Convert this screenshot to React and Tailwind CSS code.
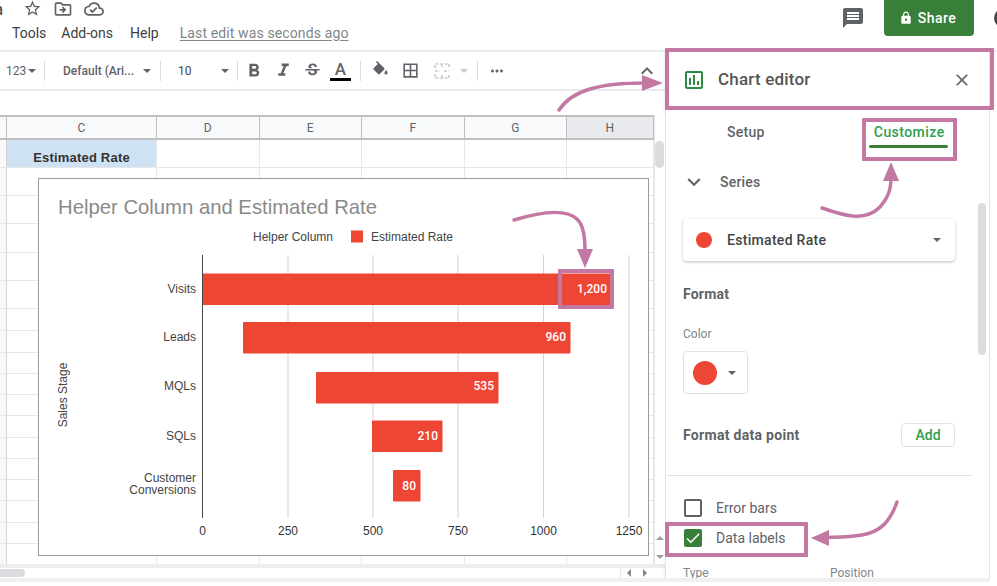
import {
  MdStarBorder,
  MdOutlineDriveFileMove,
  MdOutlineCloudDone,
  MdMessage,
  MdLock,
  MdFormatBold,
  MdFormatItalic,
  MdStrikethroughS,
  MdBorderAll,
  MdMoreHoriz,
  MdKeyboardArrowUp,
  MdClose,
  MdExpandMore,
  MdOutlineInsertChart,
  MdCheck,
} from 'react-icons/md';

const columns = [
  { name: 'C', w: 'w-[150px]' },
  { name: 'D', w: 'w-[102.5px]' },
  { name: 'E', w: 'w-[102.5px]' },
  { name: 'F', w: 'w-[102.5px]' },
  { name: 'G', w: 'w-[102.5px]' },
  { name: 'H', w: 'w-[86.5px]', active: true },
];

const rowHeights = [
  'h-[28px]', 'h-[28px]', 'h-[28px]', 'h-[29px]', 'h-[28px]', 'h-[28px]',
  'h-[22px]', 'h-[22px]', 'h-[21px]', 'h-[21px]', 'h-[21px]', 'h-[22px]',
  'h-[21px]', 'h-[21px]', 'h-[21px]', 'h-[22px]', 'h-[21px]', 'h-[21px]',
];

const bars = [
  { label: 'Visits', x1: 202.5, x2: 612, y: 273.5, textY: 292.5, value: '1,200', end: 607 },
  { label: 'Leads', x1: 243, x2: 570.5, y: 322, textY: 341, value: '960', end: 566 },
  { label: 'MQLs', x1: 316, x2: 498.5, y: 372, textY: 390, value: '535', end: 494 },
  { label: 'SQLs', x1: 372, x2: 442.5, y: 420.5, textY: 440, value: '210', end: 438 },
  { x1: 393, x2: 420.5, y: 470, textY: 489.5, value: '80', end: 416 },
];

const ticks = [
  { v: '0', x: 202.5 },
  { v: '250', x: 288 },
  { v: '500', x: 373 },
  { v: '750', x: 458 },
  { v: '1000', x: 543.5 },
  { v: '1250', x: 629 },
];

function Caret({ className = 'border-t-[#5f6368]' }) {
  return <span className={`inline-block w-0 h-0 border-x-[4px] border-x-transparent border-t-[4px] ${className}`} />;
}

function Sep() {
  return <span className="block w-px h-[20px] bg-[#dadce0] shrink-0" />;
}

function Header() {
  return (
    <header className="h-[52px] shrink-0 border-b-2 border-[#e8eaed] flex justify-between">
      <div>
        <div className="h-[19px] flex items-center text-[#5f6368]">
          <span className="text-[17px] leading-none text-[#444] w-[19px] overflow-hidden">
            <span className="block -ml-[6px]">a</span>
          </span>
          <MdStarBorder size={19} className="ml-[4px] mt-[-2px] text-[#5f6368]" />
          <MdOutlineDriveFileMove size={20} className="ml-[11px] mt-[-2px]" />
          <MdOutlineCloudDone size={20} className="ml-[11px] mt-[-2px]" />
        </div>
        <nav className="flex items-center pl-[12px] mt-[6px] text-[14px] text-[#3c4043] h-[16px]">
          <span>Tools</span>
          <span className="ml-[15px]">Add-ons</span>
          <span className="ml-[17px]">Help</span>
          <span className="ml-[21px] text-[#80868b] underline underline-offset-2 tracking-[0.12px]">Last edit was seconds ago</span>
        </nav>
      </div>
      <div className="flex items-start">
        <MdMessage size={24} className="mt-[6px] text-[#5f6368]" />
        <button className="ml-[19px] w-[90px] h-[36px] pr-[3px] bg-[#38803a] rounded-b-[4px] text-white text-[14px] tracking-[0.5px] font-medium flex items-center justify-center gap-[5px]">
          <MdLock size={14} />
          Share
        </button>
        <span className="ml-[20px] w-[20px] h-[20px] mt-[8px] rounded-full bg-[#444] shrink-0 mr-[-17px]" />
      </div>
    </header>
  );
}

function MergeIcon() {
  return (
    <svg width="18" height="18" viewBox="0 0 18 18" fill="none" stroke="#c8cacd" strokeWidth="1.6">
      <path d="M2 6V2h14v4M2 12v4h14v-4M2 9h5M11 9h5M9 2v3M9 13v3" strokeDasharray="3 1.5" />
    </svg>
  );
}

function FillIcon() {
  return (
    <svg width="19" height="19" viewBox="0 0 24 24" fill="#5f6368">
      <path d="M16.56 8.94 7.62 0 6.21 1.41l2.38 2.38-5.15 5.15c-.59.59-.59 1.54 0 2.12l5.5 5.5c.29.29.68.44 1.06.44s.77-.15 1.06-.44l5.5-5.5c.59-.58.59-1.53 0-2.12z" />
      <path d="M19 11.5s-2 2.17-2 3.5c0 1.1.9 2 2 2s2-.9 2-2c0-1.33-2-3.5-2-3.5z" />
    </svg>
  );
}

function Toolbar() {
  return (
    <div className="h-[39px] shrink-0 border-b-2 border-[#e8eaed] flex items-center text-[#5f6368]">
      <span className="ml-[6px] text-[12px] w-[22px]">123</span>
      <Caret />
      <span className="ml-[8px]"><Sep /></span>
      <span className="ml-[18px] w-[80px] text-[12px] font-[500]">Default (Ari...</span>
      <Caret />
      <span className="ml-[9px]"><Sep /></span>
      <span className="ml-[17px] w-[43px] text-[12px] text-[#444]">10</span>
      <Caret />
      <span className="ml-[8px]"><Sep /></span>
      <MdFormatBold size={22} className="ml-[5px]" />
      <MdFormatItalic size={21} className="ml-[8px]" />
      <MdStrikethroughS size={19} className="ml-[9px]" />
      <span className="ml-[8px] w-[21px] flex flex-col items-center">
        <span className="text-[17px] leading-[17px] font-medium">A</span>
        <span className="w-full h-[3px] bg-black" />
      </span>
      <span className="ml-[9px]"><Sep /></span>
      <span className="ml-[10px]"><FillIcon /></span>
      <MdBorderAll size={19} className="ml-[11px]" />
      <span className="ml-[13px]"><MergeIcon /></span>
      <Caret className="ml-[9px] border-t-[#c8cacd]" />
      <span className="ml-[9px]"><Sep /></span>
      <MdMoreHoriz size={18} className="ml-[10px]" />
      <MdKeyboardArrowUp size={24} className="ml-[129px]" />
    </div>
  );
}

function Chart() {
  return (
    <div className="absolute left-[38px] top-[63px] w-[611px] h-[378px] border border-[#9a9a9a] bg-white">
      <svg width="609" height="376" viewBox="39 179 609 376" fontFamily="'Liberation Sans', Arial, sans-serif">
        <text x="58" y="214" fontSize="20.3" fill="#8a8a8a">Helper Column and Estimated Rate</text>
        <text x="253" y="241" fontSize="12" fill="#444">Helper Column</text>
        <rect x="351" y="230.5" width="12" height="12" fill="#ee4635" />
        <text x="371" y="241" fontSize="12" fill="#444">Estimated Rate</text>
        <text transform="translate(67 395) rotate(-90)" textAnchor="middle" fontSize="12" fill="#444">Sales Stage</text>

        {ticks.slice(1).map(t => (
          <line key={t.v} x1={t.x} x2={t.x} y1="255" y2="518" stroke="#d3d3d3" />
        ))}
        {bars.map(b => (
          <rect key={b.value} x={b.x1} y={b.y} width={b.x2 - b.x1} height="31.5" rx="1" fill="#ee4635" />
        ))}
        <line x1="202.5" x2="202.5" y1="255" y2="518" stroke="#444" />

        {bars.map(b => b.label && (
          <text key={b.label} x="196" y={b.textY} textAnchor="end" fontSize="12" fill="#444">{b.label}</text>
        ))}
        <text x="196" y="482" textAnchor="end" fontSize="12" fill="#444">Customer</text>
        <text x="196" y="494" textAnchor="end" fontSize="12" fill="#444">Conversions</text>

        {bars.map(b => (
          <text key={b.value} x={b.end} y={b.textY} textAnchor="end" fontSize="12" fontWeight="500" fontFamily="Roboto, sans-serif" fill="#fff">{b.value}</text>
        ))}
        {ticks.map(t => (
          <text key={t.v} x={t.x} y="534.5" textAnchor="middle" fontSize="12" fill="#333">{t.v}</text>
        ))}
      </svg>
    </div>
  );
}

function Sheet() {
  return (
    <div className="relative flex-1 min-h-0 flex">
      <div className="w-[653.5px] shrink-0 flex flex-col overflow-hidden">
        <div className="h-[25px] shrink-0 flex border-t-2 border-b-2 border-[#c0c0c0] bg-[#f8f9fa] text-[12px] text-[#5f6368]">
          <div className="w-[7px] shrink-0 border-r border-[#c0c0c0]" />
          {columns.map(c => (
            <div
              key={c.name}
              className={`${c.w} shrink-0 border-r border-[#c0c0c0] flex items-center justify-center ${c.active ? 'bg-[#e8eaed]' : ''}`}
            >
              {c.name}
            </div>
          ))}
        </div>
        {rowHeights.map((h, i) => (
          <div key={i} className={`${h} shrink-0 flex border-b border-[#e6e7e8]`}>
            <div className="w-[7px] shrink-0 bg-[#f8f9fa] border-r border-[#d4d4d4]" />
            {columns.map((c, j) => (
              <div
                key={c.name}
                className={`${c.w} shrink-0 border-r border-[#e6e7e8] ${i === 0 && j === 0 ? 'bg-[#cfe2f3] flex items-end justify-center text-[13px] tracking-[0.2px] font-bold text-[#333] font-["Liberation_Sans",sans-serif]' : ''}`}
              >
                {i === 0 && j === 0 ? 'Estimated Rate' : null}
              </div>
            ))}
          </div>
        ))}
      </div>
      <div className="flex-1 flex flex-col items-center bg-white border-l border-[#e6e7e8] pt-[26px]">
        <div className="w-[9px] h-[27px] rounded-full bg-[#dadce0]" />
        <div className="mt-auto mb-[5px] flex flex-col items-center gap-[15px]">
          <Caret className="rotate-180 border-t-[#9aa0a6]" />
          <Caret className="border-t-[#9aa0a6]" />
        </div>
      </div>
      <Chart />
    </div>
  );
}

function Panel() {
  return (
    <aside className="w-[325px] shrink-0 flex flex-col border-l border-r border-[#e3e4e6] shadow-[-1px_0_3px_rgba(0,0,0,0.08)] bg-white text-[#5f6368] overflow-hidden">
      <div className="h-[55px] shrink-0 flex items-center pl-[16px] pr-[17px]">
        <MdOutlineInsertChart size={24} className="text-[#2f8a43]" />
        <span className="ml-[12px] text-[17px] tracking-[0.2px] font-medium text-[#555]">Chart editor</span>
        <MdClose size={20} className="ml-auto" />
      </div>
      <div className="h-[45px] shrink-0 flex relative text-[14px] tracking-[0.3px] font-medium">
        <span className="ml-[61px] mt-[15px]">Setup</span>
        <span className="ml-[109px] mt-[15px] tracking-[0.45px] text-[#2f9e4f]">Customize</span>
        <span className="absolute left-[203px] top-[38px] w-[79px] h-[3px] bg-[#38803a] rounded" />
      </div>
      <div className="flex-1 min-h-0 pl-[17px] pr-[34px] relative">
        <div className="flex items-center h-[20px] mt-[20px]">
          <MdExpandMore size={26} className="-ml-[2px]" />
          <span className="ml-[13px] text-[14px] tracking-[0.2px] font-medium">Series</span>
        </div>
        <div className="mt-[27px] h-[42px] rounded-[4px] shadow-[0_1px_3px_rgba(60,64,67,0.35)] flex items-center pl-[13px] pr-[14px]">
          <span className="w-[16px] h-[16px] rounded-full bg-[#ee4635]" />
          <span className="ml-[15px] text-[14px] tracking-[0.3px] font-medium text-[#444]">Estimated Rate</span>
          <Caret className="ml-auto" />
        </div>
        <div className="mt-[24px] text-[14px] tracking-[0.2px] font-bold leading-[18px]">Format</div>
        <div className="mt-[24px] text-[12px] leading-[14px] text-[#80868b]">Color</div>
        <div className="mt-[10px] w-[65px] h-[43px] rounded-[4px] border border-[#e0e1e3] flex items-center pl-[9px]">
          <span className="w-[24px] h-[24px] rounded-full bg-[#ee4635]" />
          <Caret className="ml-[11px]" />
        </div>
        <div className="mt-[29px] h-[24px] flex items-center justify-between">
          <span className="text-[14px] tracking-[0.3px] font-bold">Format data point</span>
          <button className="w-[54px] h-[24px] rounded-[4px] border border-[#dfe1e3] text-[14px] font-medium text-[#2f9e4f]">Add</button>
        </div>
        <div className="mt-[28px] -ml-[16px] -mr-[17px] h-px bg-[#dfe1e3]" />
        <div className="mt-[23px] flex items-center h-[18px]">
          <span className="ml-[1px] w-[18px] h-[18px] rounded-[2px] border-2 border-[#5f6368]" />
          <span className="ml-[14px] text-[14px]">Error bars</span>
        </div>
        <div className="mt-[12px] flex items-center h-[18px]">
          <span className="ml-[1px] w-[18px] h-[18px] rounded-[2px] bg-[#38803a] flex items-center justify-center">
            <MdCheck size={18} className="text-white" />
          </span>
          <span className="ml-[14px] text-[14px]">Data labels</span>
        </div>
        <div className="mt-[19px] flex text-[12px] leading-[14px] text-[#80868b]">
          <span className="w-[147px]">Type</span>
          <span>Position</span>
        </div>
        <div className="absolute right-[3px] top-[51px] w-[8px] h-[152px] rounded-full bg-[#dadce0]" />
      </div>
    </aside>
  );
}

// pink call-outs drawn on top of the screenshot
function Annotations() {
  const box = 'absolute border-[4px] border-[#c278a3] rounded-[1px]';
  return (
    <>
      <div className={`${box} left-[665px] top-[48px] w-[329px] h-[62px]`} />
      <div className={`${box} left-[862px] top-[118px] w-[95px] h-[43px]`} />
      <div className={`${box} left-[558px] top-[269px] w-[56px] h-[40px]`} />
      <div className={`${box} left-[665px] top-[522px] w-[143px] h-[35px]`} />
      <svg className="absolute inset-0 pointer-events-none" width="997" height="586" fill="none" stroke="#c278a3" strokeWidth="3.5" strokeLinecap="round">
        <path d="M559 110C572 90 600 83 645 83" />
        <path d="M642 75L663 83L642 91Z" fill="#c278a3" stroke="none" />
        <path d="M822 208C845 216 865 222 880 207C888 198 891 190 891 177" />
        <path d="M891 162L899 181L883 181Z" fill="#c278a3" stroke="none" />
        <path d="M514 220C540 212 565 208 577 219C584 226 585 238 585 252" />
        <path d="M577 249L593 249L585 268Z" fill="#c278a3" stroke="none" />
        <path d="M897 502C890 522 880 532 862 535C850 537 840 537 826 537.5" />
        <path d="M811 538L829 530L829 546Z" fill="#c278a3" stroke="none" />
      </svg>
    </>
  );
}

export default function App() {
  return (
    <div className="relative w-[997px] h-[586px] overflow-hidden bg-white font-['Roboto',sans-serif] flex flex-col">
      <Header />
      <div className="h-[526px] shrink-0 flex">
        <div className="w-[665px] shrink-0 flex flex-col">
          <Toolbar />
          <div className="h-[24px] shrink-0" />
          <Sheet />
          <div className="h-[14px] shrink-0 border-t-[4px] border-[#eceded] flex">
            <div className="w-[25px] h-[8px] mt-[1px] rounded-r-full bg-[#dadce0]" />
            <div className="ml-auto mr-[12px] w-[33px] flex items-center justify-around border-l border-[#e6e7e8]">
              <Caret className="rotate-90 border-t-[#80868b]" />
              <Caret className="-rotate-90 border-t-[#80868b]" />
            </div>
          </div>
        </div>
        <Panel />
      </div>
      <div className="h-[4px] shrink-0 w-[990px] bg-[#eef0f1]" />
      <Annotations />
    </div>
  );
}
